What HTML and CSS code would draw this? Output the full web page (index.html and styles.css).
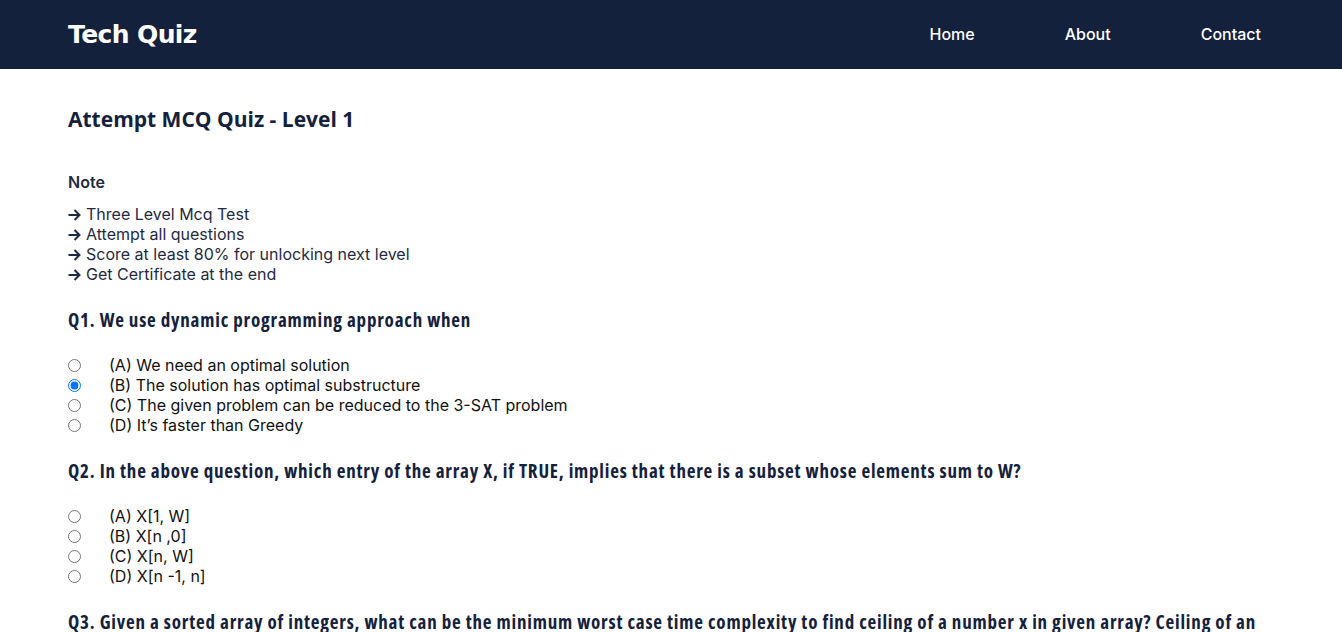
FILE: index.html
```html
<!DOCTYPE html>
<html>
<head>
<meta charset="utf-8">
<title>Tech Quiz</title>
<link rel="stylesheet" href="styles.css">
</head>
<body>
<header class="navbar">
  <div class="logo">Tech Quiz</div>
  <nav class="nav-links">
    <a href="#">Home</a>
    <a href="#">About</a>
    <a href="#">Contact</a>
  </nav>
</header>
<main class="content">
  <h1 class="title">Attempt MCQ Quiz - Level 1</h1>
  <h3 class="note-title">Note</h3>
  <ul class="note-list">
    <li><svg class="arrow" viewBox="0 0 13 12" width="13" height="12"><path d="M0.5 6H11.5M6.5 1L11.5 6L6.5 11" fill="none" stroke="currentColor" stroke-width="2"/></svg>Three Level Mcq Test</li>
    <li><svg class="arrow" viewBox="0 0 13 12" width="13" height="12"><path d="M0.5 6H11.5M6.5 1L11.5 6L6.5 11" fill="none" stroke="currentColor" stroke-width="2"/></svg>Attempt all questions</li>
    <li><svg class="arrow" viewBox="0 0 13 12" width="13" height="12"><path d="M0.5 6H11.5M6.5 1L11.5 6L6.5 11" fill="none" stroke="currentColor" stroke-width="2"/></svg>Score at least 80% for unlocking next level</li>
    <li><svg class="arrow" viewBox="0 0 13 12" width="13" height="12"><path d="M0.5 6H11.5M6.5 1L11.5 6L6.5 11" fill="none" stroke="currentColor" stroke-width="2"/></svg>Get Certificate at the end</li>
  </ul>
  <section class="question">
    <h2 class="q-text">Q1. We use dynamic programming approach when</h2>
    <label class="option"><input type="radio" name="q1"><span>(A) We need an optimal solution</span></label>
    <label class="option"><input type="radio" name="q1" checked><span>(B) The solution has optimal substructure</span></label>
    <label class="option"><input type="radio" name="q1"><span>(C) The given problem can be reduced to the 3-SAT problem</span></label>
    <label class="option"><input type="radio" name="q1"><span>(D) It’s faster than Greedy</span></label>
  </section>
  <section class="question">
    <h2 class="q-text">Q2. In the above question, which entry of the array X, if TRUE, implies that there is a subset whose elements sum to W?</h2>
    <label class="option"><input type="radio" name="q2"><span>(A) X[1, W]</span></label>
    <label class="option"><input type="radio" name="q2"><span>(B) X[n ,0]</span></label>
    <label class="option"><input type="radio" name="q2"><span>(C) X[n, W]</span></label>
    <label class="option"><input type="radio" name="q2"><span>(D) X[n -1, n]</span></label>
  </section>
  <section class="question">
    <h2 class="q-text">Q3. Given a sorted array of integers, what can be the minimum worst case time complexity to find ceiling of a number x in given array? Ceiling of an element x is the smallest element present in array which is greater than or equal to x.</h2>
  </section>
</main>
</body>
</html>
```
FILE: styles.css
```css
* { box-sizing: border-box; }
body {
  margin: 0;
  font-family: Inter, "Noto Sans", sans-serif;
  color: #14213d;
  background: #fff;
}
.navbar {
  height: 69px;
  background: #14213d;
  display: flex;
  align-items: center;
  justify-content: space-between;
  padding: 0 81px 0 68px;
}
.logo {
  font-family: "DejaVu Sans", Verdana, sans-serif;
  font-weight: bold;
  font-size: 25px;
  color: #fff;
  letter-spacing: -0.6px;
  margin-top: -1px;
}
.nav-links {
  display: flex;
  gap: 90px;
  margin-top: -1px;
}
.nav-links a {
  color: #fff;
  text-decoration: none;
  font-size: 16px;
  font-weight: 500;
}
.content {
  padding: 0 68px;
}
.title {
  margin: 36px 0 0;
  font-family: "Open Sans", sans-serif;
  font-size: 21px;
  font-weight: 700;
  line-height: 28px;
  color: #14213d;
}
.note-title {
  margin: 39px 0 0;
  font-size: 16px;
  font-weight: 600;
  line-height: 20px;
  color: #1f2a44;
}
.note-list {
  list-style: none;
  margin: 12px 0 0;
  padding: 0;
  font-size: 16px;
  line-height: 20px;
  color: #1f2a44;
}
.note-list li {
  height: 20px;
}
.arrow {
  display: inline-block;
  vertical-align: -1px;
  margin-right: 5px;
}
.question {
  margin-top: 26px;
}
.q-text {
  margin: 0 0 25px;
  font-family: "Open Sans", sans-serif;
  font-stretch: 75%;
  font-size: 19px;
  letter-spacing: 0.8px;
  font-weight: 700;
  line-height: 20px;
  color: #14213d;
}
.option {
  display: flex;
  align-items: center;
  height: 20px;
  font-size: 16px;
  color: #111;
}
.option input {
  margin: 0 28px 0 0;
  width: 13px;
  height: 13px;
}
```
